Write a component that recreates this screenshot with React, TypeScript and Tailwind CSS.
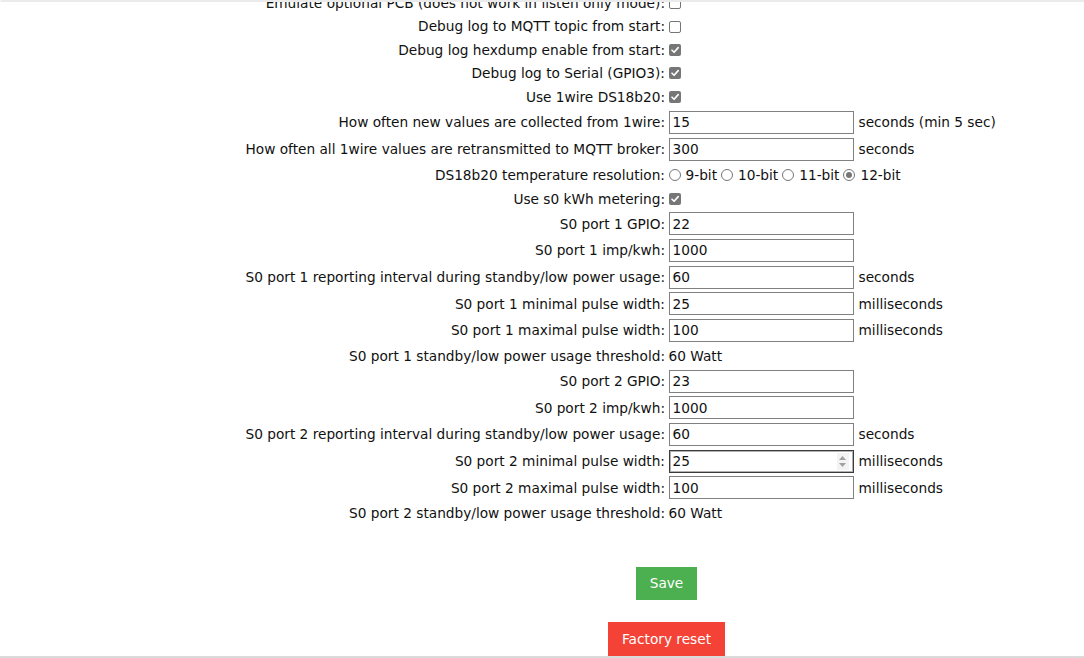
import React from "react";

type Row =
  | { kind: "cb"; label: string; checked: boolean }
  | { kind: "input"; label: string; value: string; unit?: string; focused?: boolean }
  | { kind: "radio"; label: string }
  | { kind: "text"; label: string; value: string };

const rows: Row[] = [
  { kind: "cb", label: "Emulate optional PCB (does not work in listen only mode):", checked: false },
  { kind: "cb", label: "Debug log to MQTT topic from start:", checked: false },
  { kind: "cb", label: "Debug log hexdump enable from start:", checked: true },
  { kind: "cb", label: "Debug log to Serial (GPIO3):", checked: true },
  { kind: "cb", label: "Use 1wire DS18b20:", checked: true },
  { kind: "input", label: "How often new values are collected from 1wire:", value: "15", unit: "seconds (min 5 sec)" },
  { kind: "input", label: "How often all 1wire values are retransmitted to MQTT broker:", value: "300", unit: "seconds" },
  { kind: "radio", label: "DS18b20 temperature resolution:" },
  { kind: "cb", label: "Use s0 kWh metering:", checked: true },
  { kind: "input", label: "S0 port 1 GPIO:", value: "22" },
  { kind: "input", label: "S0 port 1 imp/kwh:", value: "1000" },
  { kind: "input", label: "S0 port 1 reporting interval during standby/low power usage:", value: "60", unit: "seconds" },
  { kind: "input", label: "S0 port 1 minimal pulse width:", value: "25", unit: "milliseconds" },
  { kind: "input", label: "S0 port 1 maximal pulse width:", value: "100", unit: "milliseconds" },
  { kind: "text", label: "S0 port 1 standby/low power usage threshold:", value: "60 Watt" },
  { kind: "input", label: "S0 port 2 GPIO:", value: "23" },
  { kind: "input", label: "S0 port 2 imp/kwh:", value: "1000" },
  { kind: "input", label: "S0 port 2 reporting interval during standby/low power usage:", value: "60", unit: "seconds" },
  { kind: "input", label: "S0 port 2 minimal pulse width:", value: "25", unit: "milliseconds", focused: true },
  { kind: "input", label: "S0 port 2 maximal pulse width:", value: "100", unit: "milliseconds" },
  { kind: "text", label: "S0 port 2 standby/low power usage threshold:", value: "60 Watt" },
];

function Checkbox({ checked }: { checked: boolean }) {
  if (checked) {
    return (
      <span className="inline-flex h-[12px] w-[12px] items-center justify-center rounded-[2px] bg-[#767676]">
        <svg width="10" height="10" viewBox="0 0 10 10">
          <path d="M2 5.2 L4.1 7.3 L8.2 2.6" stroke="#fff" strokeWidth="1.6" fill="none" strokeLinecap="round" strokeLinejoin="round" />
        </svg>
      </span>
    );
  }
  return <span className="inline-block h-[12px] w-[12px] rounded-[2px] border border-[#767676] bg-white" />;
}

function Radio({ checked }: { checked: boolean }) {
  return (
    <span className="inline-flex h-[12px] w-[12px] items-center justify-center rounded-full border border-[#767676] bg-white">
      {checked && <span className="h-[6px] w-[6px] rounded-full bg-[#767676]" />}
    </span>
  );
}

function Field({ value, focused }: { value: string; focused?: boolean }) {
  return (
    <div
      className={
        "flex h-[23px] w-[185px] items-center justify-between border bg-white pl-[3px] pr-[4px] " +
        (focused ? "border-[#3b3b3b] ring-1 ring-inset ring-[#3b3b3b]/40" : "border-[#808080]")
      }
    >
      <span>{value}</span>
      {focused && (
        <span className="flex h-[17px] w-[12px] flex-col items-center justify-center gap-[3px] bg-[#f3f3f3]">
          <svg width="7" height="4" viewBox="0 0 7 4">
            <path d="M0 4 L3.5 0 L7 4 Z" fill="#a0a0a0" />
          </svg>
          <svg width="7" height="4" viewBox="0 0 7 4">
            <path d="M0 0 L3.5 4 L7 0 Z" fill="#a0a0a0" />
          </svg>
        </span>
      )}
    </div>
  );
}

function rowHeight(r: Row, i: number) {
  if (r.kind === "input") return "h-[26.67px]";
  if (r.kind === "radio") return "h-[24.67px]";
  if (r.kind === "text") return "h-[24px]";
  if (i === 4) return "h-[24.33px]";
  return "h-[23.33px]";
}

export default function App() {
  return (
    <div
      className="relative h-[658px] w-[1084px] overflow-hidden bg-white text-[13.7px] text-[#111]"
      style={{ fontFamily: '"DejaVu Sans", Verdana, sans-serif' }}
    >
      <div className="mt-[-8.3px] flex flex-col">
        {rows.map((r, i) => (
          <div key={i} className={"flex items-center " + rowHeight(r, i)}>
            <div className="w-[665px] shrink-0 whitespace-nowrap text-right">{r.label}</div>
            <div className="ml-[3.5px] flex items-center whitespace-nowrap">
              {r.kind === "cb" && <Checkbox checked={r.checked} />}
              {r.kind === "input" && (
                <>
                  <Field value={r.value} focused={r.focused} />
                  {r.unit && <span className="ml-[5px]">{r.unit}</span>}
                </>
              )}
              {r.kind === "text" && <span>{r.value}</span>}
              {r.kind === "radio" && (
                <div className="flex items-center">
                  <Radio checked={false} />
                  <span className="ml-[5px] mr-[4px]">9-bit</span>
                  <Radio checked={false} />
                  <span className="ml-[5px] mr-[4px]">10-bit</span>
                  <Radio checked={false} />
                  <span className="ml-[5px] mr-[4px]">11-bit</span>
                  <Radio checked={true} />
                  <span className="ml-[5px]">12-bit</span>
                </div>
              )}
            </div>
          </div>
        ))}
      </div>
      <div className="ml-[249px] mt-[41.7px] flex w-[835px] flex-col items-center">
        <button className="h-[33px] w-[61px] bg-[#4caf50] text-[13.7px] text-white">Save</button>
        <button className="mt-[22px] h-[34px] w-[117px] bg-[#f44336] text-[13.7px] text-white">Factory reset</button>
      </div>
      <div className="absolute left-0 right-0 top-0 h-[2px] rounded-tl-[3px] bg-[#ebebeb]" />
      <div className="absolute bottom-0 left-0 right-0 h-[2px] bg-[#dadada]" />
    </div>
  );
}
